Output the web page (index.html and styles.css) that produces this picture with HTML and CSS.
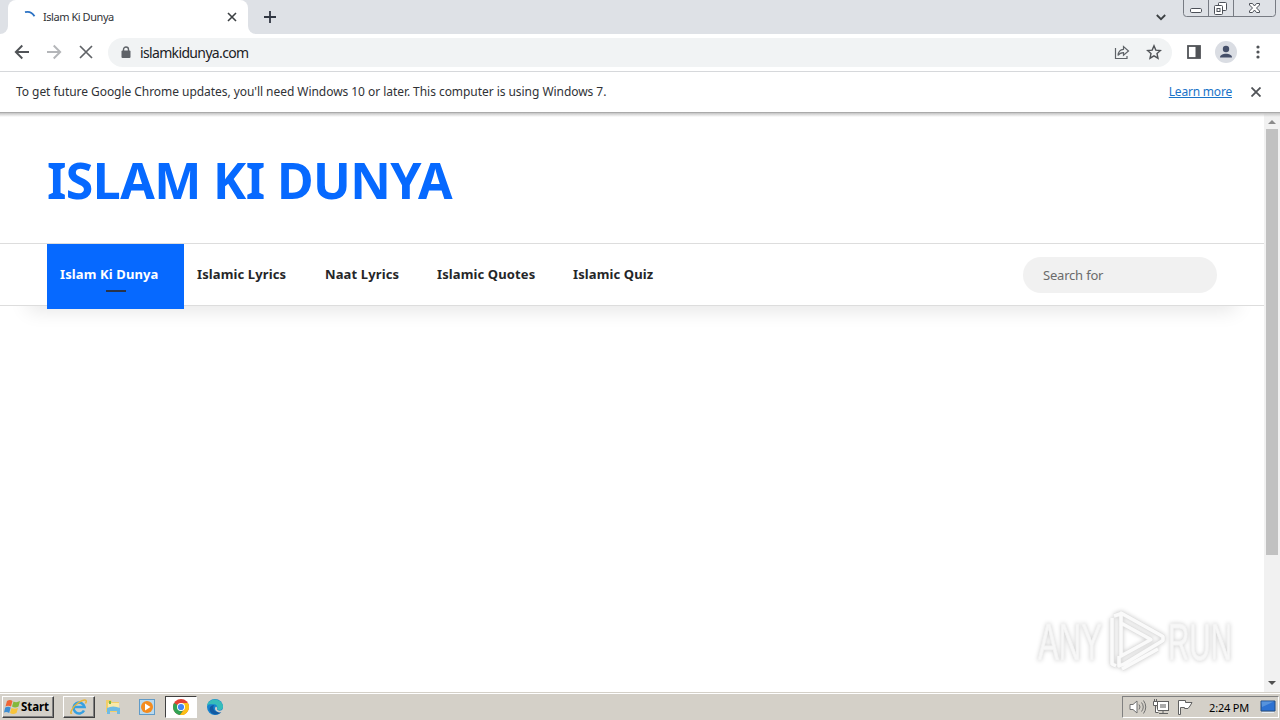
FILE: index.html
```html
<!DOCTYPE html>
<html lang="en">
<head>
    <meta charset="UTF-8">
    <meta name="viewport" content="width=device-width, initial-scale=1.0">
    <title>Islam Ki Dunya</title>
    <link rel="stylesheet" href="styles.css">
</head>
<body>
    <div class="tab-strip">
        <div class="strip-edge"></div>
        <div class="tab">
            <svg class="spinner" width="16" height="16" viewBox="0 0 16 16" fill="none" stroke="#2b72c4" stroke-width="1.8"><path d="M4 2.200Q10 .5 13.500 6.200"/></svg>
            <span class="tab-title">Islam Ki Dunya</span>
            <svg width="10" height="10" viewBox="0 0 10 10" stroke="#3c4043" stroke-width="1.6"><path d="M1 1l8 8M9 1L1 9"/></svg>
        </div>
        <div class="strip-rest">
            <svg class="new-tab" width="12" height="12" viewBox="0 0 12 12" stroke="#303642" stroke-width="1.8"><path d="M6 0v12M0 6h12"/></svg>
            <svg class="tab-search" width="10" height="7" viewBox="0 0 10 7" fill="none" stroke="#3c4043" stroke-width="1.8"><path d="M.8 1L5 5.2 9.2 1"/></svg>
            <svg class="window-buttons" width="94" height="18" viewBox="0 0 94 18" fill="none" stroke="#777b83">
                <path d="M.5 0v13.500q0 3 3 3h86q3 0 3-3V0M25.500 0v16M50.500 0v16"/>
                <g stroke="#4c5058" fill="#fff">
                    <rect x="7.500" y="8.500" width="11" height="4" rx="1.200"/>
                    <rect x="35.500" y="2.500" width="8" height="8" rx="1"/>
                    <rect x="31.500" y="5.500" width="8" height="9" rx="1"/>
                    <rect x="34" y="8.500" width="3" height="3"/>
                    <path d="M66.500 3.500h3l2 2.500 2-2.500h3v1.500L73.500 8l3 3v1.500h-3l-2-2.500-2 2.500h-3V11l3-3-3-3z"/>
                </g>
            </svg>
        </div>
    </div>

    <div class="toolbar">
        <svg class="nav-icon" width="16" height="16" viewBox="0 0 16 16" fill="none" stroke="#505357" stroke-width="1.900"><path d="M15 8H2M8.300 1.500L1.800 8l6.500 6.500"/></svg>
        <svg class="nav-icon" width="16" height="16" viewBox="0 0 16 16" fill="none" stroke="#b4b6b9" stroke-width="1.900"><path d="M1 8h13M7.700 1.500L14.200 8l-6.500 6.500"/></svg>
        <svg class="nav-icon" width="16" height="16" viewBox="0 0 16 16" stroke="#606367" stroke-width="1.700"><path d="M2 2l12 12M14 2L2 14"/></svg>
        <div class="omnibox">
            <svg width="10" height="13" viewBox="0 0 10 13"><path d="M2.500 6V3.500a2.500 2.500 0 0 1 5 0V6" fill="none" stroke="#5f6368" stroke-width="1.400"/><rect x=".5" y="4.500" width="9" height="7.500" rx="1" fill="#5f6368"/></svg>
            <span class="url">islamkidunya.com</span>
            <svg class="share" width="16" height="16" viewBox="0 0 16 16" fill="none" stroke="#5f6368" stroke-width="1.200"><path d="M1.500 4v10.500H13V12M4 11.500C4.300 7.300 6.500 5.500 9.500 5.300V2.500L14.500 7l-5 4.300V8.600C7 8.600 5.300 9.400 4 11.500z"/></svg>
            <svg width="16" height="16" viewBox="0 0 16 16" fill="none" stroke="#505357" stroke-width="1.400"><path d="M8 1.800l1.800 4.300 4.700.4-3.500 3.100 1 4.600-4-2.400-4 2.400 1-4.600L1.500 6.500l4.700-.4z"/></svg>
        </div>
        <svg class="side-panel" width="14" height="14" viewBox="0 0 14 14"><rect x="1" y="1" width="12" height="12" fill="#fff" stroke="#505357" stroke-width="1.800"/><path d="M8.500 1H13v12H8.500z" fill="#505357"/></svg>
        <svg class="profile" width="22" height="22" viewBox="0 0 22 22"><circle cx="11" cy="11" r="11" fill="#dadde3"/><circle cx="11" cy="8" r="3.200" fill="#454f69"/><path d="M5 16.500c0-5 12-5 12 0z" fill="#454f69"/></svg>
        <svg width="4" height="14" viewBox="0 0 4 14" fill="#505357"><circle cx="2" cy="2" r="1.600"/><circle cx="2" cy="7" r="1.600"/><circle cx="2" cy="12" r="1.600"/></svg>
    </div>

    <div class="infobar">
        <span class="infobar-text">To get future Google Chrome updates, you'll need Windows 10 or later. This computer is using Windows 7.</span>
        <a class="learn-more" href="#">Learn more</a>
        <svg width="10" height="10" viewBox="0 0 10 10" stroke="#505357" stroke-width="1.800"><path d="M.5.5l9 9M9.500.5l-9 9"/></svg>
    </div>

    <div class="viewport">
        <div class="page">
            <header class="site-header">
                <h1 class="site-title">ISLAM KI DUNYA</h1>
            </header>
            <nav class="main-nav">
                <a class="nav-link active" href="#">Islam Ki Dunya</a>
                <a class="nav-link lyrics" href="#">Islamic Lyrics</a>
                <a class="nav-link naat" href="#">Naat Lyrics</a>
                <a class="nav-link quotes" href="#">Islamic Quotes</a>
                <a class="nav-link quiz" href="#">Islamic Quiz</a>
                <input class="search" type="text" placeholder="Search for">
            </nav>
            <div class="nav-shadow"></div>
        </div>
        <div class="scrollbar">
            <svg width="8" height="4" viewBox="0 0 8 4" fill="#8a8a8a"><path d="M0 4l4-4 4 4z"/></svg>
            <div class="thumb"></div>
            <svg width="8" height="4" viewBox="0 0 8 4" fill="#505050"><path d="M0 0l4 4 4-4z"/></svg>
        </div>
        <svg class="watermark" width="230" height="76" viewBox="0 0 230 76">
            <g class="mark-text">
                <text x="8" y="56" textLength="64" lengthAdjust="spacingAndGlyphs">ANY</text>
                <text x="138" y="56" textLength="64" lengthAdjust="spacingAndGlyphs">RUN</text>
            </g>
            <g fill="none" stroke-linejoin="round">
                <path class="mark-edge" d="M91 19v33l30-16.500zM91 19v-10l42 23.500v4L94 60l-5 2V52M82 14v46l4 2M84 12l6-2M92 65l36-20"/>
                <path class="mark-line" d="M91 19v33l30-16.500zM91 19v-10l42 23.500v4L94 60l-5 2V52M82 14v46l4 2M84 12l6-2M92 65l36-20"/>
            </g>
        </svg>
    </div>

    <div class="taskbar">
        <div class="start">
            <svg width="17" height="16" viewBox="0 0 17 16"><path d="M3 2q3-2 5.500 0L7 7.500q-3-1.500-5.500 0z" fill="#ef6535"/><path d="M9.500 2.500Q12.500 4 16 2l-1.500 5.500q-3.500 2-6.500 0z" fill="#83b83b"/><path d="M1.200 8.500q3-1.500 5.500 0L5.200 14Q2.500 12.500 0 13.500z" fill="#3d8dd2"/><path d="M7.500 9q3 1.500 6.500 0l-1.500 5q-3.500 2-6.500 0z" fill="#f8c43a"/></svg>
            <span class="start-text">Start</span>
        </div>
        <div class="task raised">
            <svg width="18" height="18" viewBox="0 0 18 18" fill="none"><path d="M14 12.500A5.500 5.500 0 1 1 14.500 9H4" stroke="#36a0e1" stroke-width="2.600"/><path d="M2 15C-1 17 2 9 8 5s10-4 7.500.5" stroke="#e9b536" stroke-width="1.500"/></svg>
        </div>
        <div class="task">
            <svg width="18" height="18" viewBox="0 0 18 18"><path d="M2 2h5l1 2h7v10H2z" fill="#f2ce69"/><path d="M4 5h11v8H4z" fill="#fae9a9"/><path d="M3 10q6-3 13 0v6h-3v-3H6v3H3z" fill="#6fbbe4"/><path d="M5 3h2v3H5z" fill="#76b947"/></svg>
        </div>
        <div class="task">
            <svg width="18" height="18" viewBox="0 0 18 18"><rect x="1.500" y="1.500" width="15" height="15" fill="#b9d9ee" stroke="#609bc8"/><circle cx="9" cy="9" r="6" fill="#f48b1e"/><path d="M7 5.500l5.500 3.500L7 12.500z" fill="#fff"/></svg>
        </div>
        <div class="task pressed">
            <svg width="18" height="18" viewBox="0 0 18 18"><circle cx="9" cy="9" r="8" fill="#e34133"/><path d="M9 9L2.100 5A8 8 0 0 0 8 17l4-6z" fill="#31a354"/><path d="M9 5h6.900A8 8 0 0 1 8 17l4.500-6z" fill="#fbc116"/><circle cx="9" cy="9" r="4" fill="#fff"/><circle cx="9" cy="9" r="3.100" fill="#4285f4"/></svg>
        </div>
        <div class="task">
            <svg width="18" height="18" viewBox="0 0 18 18"><circle cx="9" cy="9" r="8" fill="#1683cf"/><path d="M1 8C2-.5 15-1 17 8c.3 4-4 5-6 3.300 1-2 0-5-3-5S2 6 1 8z" fill="#36bdba"/><path d="M8 7c-2 3 0 8 7.500 6.800C12 18.500 4 17 3.500 11 4 8 6 7 8 7z" fill="#125aa3"/><path d="M10 8.500c2 1 .5 3 1.500 3.500 2 1.300 4.500.5 5.500-1v3l-3 .5C9 14 8 10 10 8.500z" fill="#d4d0c8"/></svg>
        </div>
        <div class="tray">
            <svg width="18" height="16" viewBox="0 0 18 16" fill="none" stroke="#707070"><path d="M1 5.500h3L8 2v12l-4-3.500H1z" fill="#fff"/><path d="M10 5.500q2 2.500 0 5M12.500 3.500q3.500 4.500 0 9M14.500 1.500q4.500 6.500 0 13"/></svg>
            <svg class="network" width="18" height="16" viewBox="0 0 18 16" fill="#fff" stroke="#606060"><rect x="4.500" y="2.500" width="11" height="9"/><path d="M7 5h6v4H7z" fill="#aaa" stroke="none"/><path d="M6 14.500h9M10 12v2M.5 2.500h4v4h-4zM1.500 2V0M3.500 2V0M2.500 6.500v7h3" /></svg>
            <svg class="flag" width="17" height="16" viewBox="0 0 17 16" fill="#fff" stroke="#606060"><path d="M1.500 15.500V1.500h7v2h6.500l-2 3.500-2 2.500H7.500V8.500h-4v7z"/></svg>
            <span class="clock">2:24 PM</span>
            <svg width="16" height="14" viewBox="0 0 16 14"><path d="M1 1h14v10H1z" fill="#2d72d2" stroke="#234d82"/><path d="M1.500 1.500H14L2 7z" fill="#5793dc"/><path d="M2 12h12v1H2z" fill="#e6edf5"/></svg>
        </div>
    </div>
</body>
</html>
```
FILE: styles.css
```css
* {
    box-sizing: border-box;
}

body {
    margin: 0;
    width: 1280px;
    height: 720px;
    overflow: hidden;
    display: flex;
    flex-direction: column;
    background: #fff;
    font-family: "Noto Sans", sans-serif;
    color: #303236;
    white-space: nowrap;
}

svg {
    display: block;
    flex-shrink: 0;
}

.tab-strip {
    height: 34px;
    flex-shrink: 0;
    display: flex;
    background: #fff;
}

.strip-edge {
    width: 8px;
    background: #dee1e6;
    border-bottom-right-radius: 8px;
}

.tab {
    width: 240px;
    display: flex;
    align-items: center;
    padding: 0 11px 0 13px;
    background: linear-gradient(#dee1e6, #dee1e6) top / 100% 10px no-repeat;
    position: relative;
    z-index: 0;
}

.tab::before {
    content: "";
    position: absolute;
    inset: 0;
    z-index: -1;
    background: #fff;
    border-radius: 8px 8px 0 0;
}

.spinner {
    margin-top: 1px;
}

.tab-title {
    flex: 1;
    margin-left: 6px;
    padding-bottom: 2px;
    font-size: 11px;
    letter-spacing: -0.45px;
}

.strip-rest {
    flex: 1;
    display: flex;
    align-items: center;
    padding: 0 3px 0 16px;
    background: #dee1e6;
    border-bottom-left-radius: 8px;
}

.tab-search {
    margin-left: auto;
    margin-right: 17px;
}

.window-buttons {
    align-self: flex-start;
}

.toolbar {
    height: 38px;
    flex-shrink: 0;
    display: flex;
    align-items: center;
    padding: 0 20px 1px 14px;
    border-bottom: 1px solid #d6d8db;
}

.nav-icon {
    margin-right: 16px;
}

.omnibox {
    width: 1064px;
    height: 29px;
    margin-left: -2px;
    display: flex;
    align-items: center;
    padding: 0 10px 0 13px;
    background: #f1f3f4;
    border-radius: 15px;
}

.url {
    margin-left: 9px;
    font-size: 14px;
    letter-spacing: -0.65px;
    color: #202124;
}

.share {
    margin-left: auto;
    margin-right: 16px;
}

.side-panel {
    margin-left: 15px;
}

.profile {
    margin: 0 auto 0 14px;
}

.infobar {
    height: 41px;
    flex-shrink: 0;
    display: flex;
    align-items: center;
    padding: 0 19px 0 16px;
    border-bottom: 1px solid #aaa;
    font-size: 12px;
}

.infobar-text {
    padding-bottom: 2px;
    letter-spacing: -0.05px;
}

.learn-more {
    margin-left: auto;
    margin-right: 19px;
    padding-bottom: 2px;
    color: #1a73c8;
    letter-spacing: -0.2px;
}

.viewport {
    height: 579px;
    flex-shrink: 0;
    display: flex;
    position: relative;
    background: linear-gradient(#c4c4c4, #fff 4px);
}

.page {
    width: 1264px;
}

.site-header {
    height: 131px;
    display: flex;
    align-items: center;
    padding: 4px 47px 0;
    border-bottom: 1px solid #ddd;
}

.site-title {
    margin: 0;
    font-size: 50px;
    line-height: 68px;
    font-weight: 700;
    letter-spacing: -0.6px;
    color: #0669ff;
}

.main-nav {
    height: 62px;
    display: flex;
    align-items: center;
    padding: 0 47px;
    border-bottom: 1px solid #ddd;
    position: relative;
    z-index: 1;
}

.nav-link {
    padding-bottom: 2px;
    font-size: 13px;
    line-height: 18px;
    font-weight: 700;
    letter-spacing: 0.12px;
    color: #252628;
    text-decoration: none;
}

.nav-link.active {
    align-self: flex-start;
    width: 137px;
    height: 65px;
    padding: 21px 13px 0;
    color: #fff;
    background: #0669ff;
}

.nav-link.active::after {
    content: "";
    display: block;
    width: 20px;
    height: 2px;
    margin: 7px 0 0 46px;
    background: #28334a;
}

.lyrics {
    width: 128px;
    margin-left: 13px;
}

.naat {
    width: 112px;
}

.quotes {
    width: 136px;
}

.search {
    width: 194px;
    height: 36px;
    margin-left: auto;
    padding: 0 20px;
    border: 0;
    border-radius: 18px;
    background: #f1f1f1;
    font-family: inherit;
    font-size: 13px;
    letter-spacing: -0.2px;
}

.search::placeholder {
    color: #6b6b6b;
}

.nav-shadow {
    height: 24px;
    overflow: hidden;
}

.nav-shadow::before {
    content: "";
    display: block;
    height: 20px;
    margin: -20px 28px 0;
    box-shadow: 0 4px 20px rgba(0, 0, 0, 0.11);
}

.scrollbar {
    width: 16px;
    display: flex;
    flex-direction: column;
    align-items: center;
    padding: 7px 0 7px;
    background: linear-gradient(#c4c4c4, #f1f1f1 4px);
}

.thumb {
    width: 12px;
    height: 426px;
    margin: 5px 0 auto;
    background: #c1c1c1;
}

.watermark {
    position: absolute;
    left: 1030px;
    top: 491px;
    filter: drop-shadow(0 0 2px rgba(0, 0, 0, 0.2));
}

.mark-text {
    font-family: "Liberation Sans Narrow", "Liberation Sans", sans-serif;
    font-size: 51px;
    fill: #f7f7f7;
    stroke: #f3f3f3;
    stroke-width: 1px;
}

.mark-edge {
    stroke: #e0e0e0;
    stroke-width: 4.5px;
}

.mark-line {
    stroke: #fafafa;
    stroke-width: 3.5px;
}

.taskbar {
    height: 28px;
    flex-shrink: 0;
    display: flex;
    align-items: center;
    padding: 1px 1px 0 2px;
    background: #d4d0c8;
    border-top: 1px solid #d4d0c8;
    box-shadow: inset 0 1px #fff;
}

.start,
.raised {
    border: 1px solid;
    border-color: #fff #404040 #404040 #fff;
    box-shadow: inset -1px -1px #808080;
}

.start {
    width: 52px;
    height: 22px;
    display: flex;
    align-items: center;
    padding-left: 1px;
    margin-right: 9px;
}

.start-text {
    padding-bottom: 1px;
    font-size: 11.5px;
    font-weight: 700;
    color: #000;
    letter-spacing: -0.1px;
}

.task {
    width: 32px;
    height: 22px;
    margin-right: 2px;
    display: flex;
    align-items: center;
    justify-content: center;
}

.pressed {
    background: #fff;
    border: 1px solid;
    border-color: #404040 #fff #fff #404040;
}

.tray {
    width: 157px;
    height: 22px;
    margin-left: auto;
    display: flex;
    align-items: center;
    padding: 0 2px 0 6px;
    border: 1px solid;
    border-color: #808080 #fff #fff #808080;
}

.network {
    margin-left: 6px;
}

.flag {
    margin-left: 6px;
}

.clock {
    margin-left: auto;
    margin-right: 11px;
    font-size: 11px;
    letter-spacing: -0.2px;
    color: #000;
}
```
